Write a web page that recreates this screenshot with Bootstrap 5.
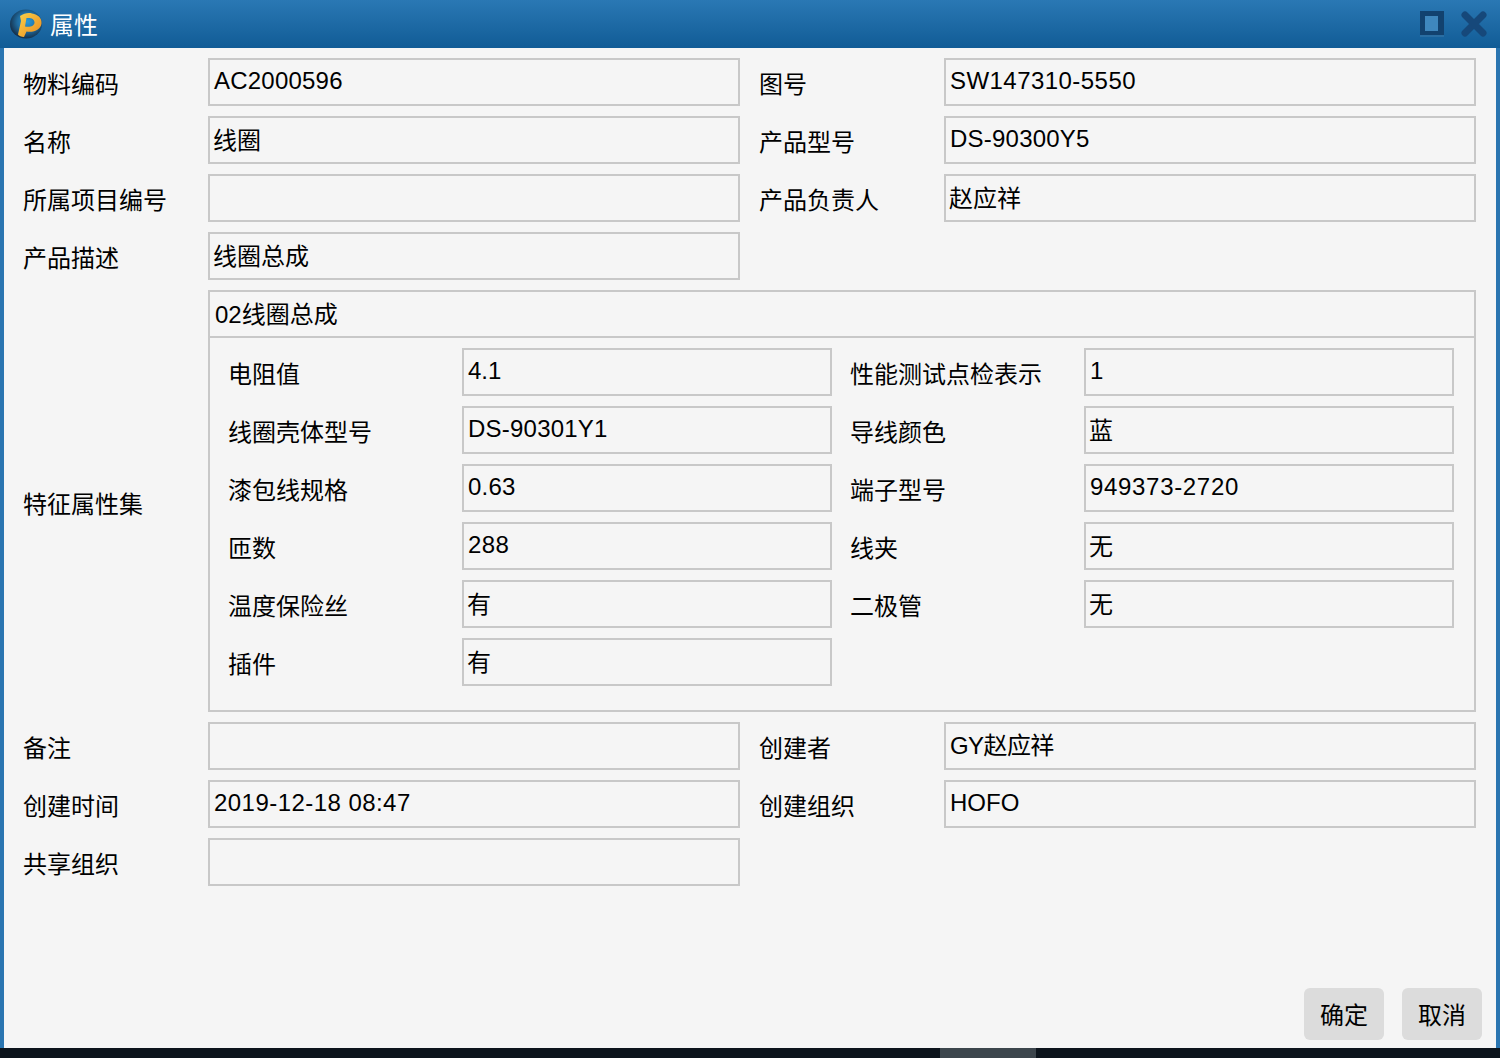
<!DOCTYPE html>
<html lang="zh">
<head>
<meta charset="utf-8">
<title>属性</title>
<link href="https://cdn.jsdelivr.net/npm/bootstrap@5.3.0/dist/css/bootstrap.min.css" rel="stylesheet">
<style>
html,body{height:100%;}
body{background:#0c141c;font-family:"Liberation Sans","Noto Sans CJK SC",sans-serif;font-size:24px;color:#000;overflow:hidden;}
.win{height:1048px;background:#f5f5f5;border-left:4px solid #2a75b0;border-right:4px solid #2a75b0;}
.titlebar{height:48px;margin:0 -4px;padding:0 13px 0 10px;background:linear-gradient(#2a78b4,#115c96);color:#fff;}
.titlebar .ttl{margin-left:8px;line-height:52px;height:48px;}
.tb-ico{display:block;flex:none;}
.tb-max{margin-right:17px;}
.body-area{padding:10px 20px 0 20px;height:1000px;position:relative;}
.prow{display:flex;gap:19px;margin-bottom:10px;}
.pcell{display:flex;align-items:center;width:717px;flex:none;}
.plabel{width:184px;height:48px;flex:none;line-height:54px;white-space:nowrap;text-indent:-1px;}
.grp-label{margin-top:4px;line-height:52px;}
.pval.form-control{width:532px;height:48px;flex:none;background:#f5f5f5;border:2px solid #c8c8c8;border-radius:0;padding:0 4px;font-size:24px;line-height:42px;color:#000;white-space:nowrap;overflow:hidden;}
.pval.form-control.val-cjk{line-height:46px;text-indent:-1px;}
.pval.form-control.val-mix{line-height:44px;letter-spacing:-.6px;}
.sp1{letter-spacing:.22px;}
.sp2{letter-spacing:.45px;}
.sp3{letter-spacing:.68px;}
.grp{width:1268px;height:422px;border:2px solid #c8c8c8;flex:none;}
.grp-h{height:46px;line-height:46px;padding:0 4px 0 5px;border-bottom:2px solid #c8c8c8;}
.grp-b{padding:10px 20px 0 18px;}
.irow{display:flex;gap:18px;margin-bottom:10px;}
.icell{display:flex;align-items:center;width:604px;flex:none;}
.icell .plabel{width:234px;text-indent:0;}
.icell .pval.form-control{width:370px;}
.foot{position:absolute;right:14px;bottom:8px;display:flex;gap:18px;}
.fbtn.btn{width:80px;height:52px;padding:0;background:#dcdcdc;border:0;border-radius:6px;font-size:24px;color:#000;line-height:56px;}
.sbar{height:10px;position:relative;}
.sthumb{position:absolute;left:940px;width:96px;height:10px;background:#3c454c;}
</style>
</head>
<body>
<div class="win">
 <div class="titlebar d-flex align-items-center">
  <svg class="tb-ico" width="32" height="30" viewBox="0 0 32 30"><defs><radialGradient id="g" cx=".55" cy=".42" r=".6"><stop offset="0" stop-color="#2a9ad8"/><stop offset=".55" stop-color="#1f6a9e"/><stop offset="1" stop-color="#142c44"/></radialGradient><linearGradient id="o" x1="0" y1="0" x2="1" y2="1"><stop offset="0" stop-color="#f8d24a"/><stop offset="1" stop-color="#ec8a1e"/></linearGradient></defs><ellipse cx="16" cy="15" rx="16" ry="14.500" fill="url(#g)"/><path fill-rule="evenodd" d="M10 7C14 4.500 18 3.500 22 4.500C28 5.500 32 9 31.500 14.500C31 20 24 24 16.500 22.500L14 28C11.500 28 9 27 8 25.500L11 12ZM16.500 9L15 17.500C20 18.500 24.500 17 24.500 13.500C24.500 9.500 20.500 8.500 16.500 9Z" fill="url(#o)"/></svg>
  <span class="ttl flex-grow-1">属性</span>
  <svg width="24" height="26" viewBox="0 0 24 26" class="tb-ico tb-max"><rect width="24" height="24" fill="#12426f"/><rect x="5" y="5" width="13" height="15" fill="#3f87bd"/><rect y="24" width="24" height="2" fill="#2a6ea3"/></svg>
  <svg width="26" height="26" viewBox="0 0 26 26" class="tb-ico"><path d="M4 4L22 22M22 4L4 22" stroke="#16487a" stroke-width="7" stroke-linecap="round"/></svg>
 </div>
 <div class="body-area">
  <div class="prow">
   <div class="pcell"><div class="plabel">物料编码</div><div class="pval form-control sp1">AC2000596</div></div>
   <div class="pcell"><div class="plabel">图号</div><div class="pval form-control sp2">SW147310-5550</div></div>
  </div>
  <div class="prow">
   <div class="pcell"><div class="plabel">名称</div><div class="pval form-control val-cjk">线圈</div></div>
   <div class="pcell"><div class="plabel">产品型号</div><div class="pval form-control sp1">DS-90300Y5</div></div>
  </div>
  <div class="prow">
   <div class="pcell"><div class="plabel">所属项目编号</div><div class="pval form-control"></div></div>
   <div class="pcell"><div class="plabel">产品负责人</div><div class="pval form-control val-cjk">赵应祥</div></div>
  </div>
  <div class="prow">
   <div class="pcell"><div class="plabel">产品描述</div><div class="pval form-control val-cjk">线圈总成</div></div>
  </div>
  <div class="prow">
   <div class="d-flex align-items-center">
    <div class="plabel grp-label">特征属性集</div>
    <div class="grp">
     <div class="grp-h">02线圈总成</div>
     <div class="grp-b">
      <div class="irow">
       <div class="icell"><div class="plabel">电阻值</div><div class="pval form-control">4.1</div></div>
       <div class="icell"><div class="plabel">性能测试点检表示</div><div class="pval form-control">1</div></div>
      </div>
      <div class="irow">
       <div class="icell"><div class="plabel">线圈壳体型号</div><div class="pval form-control sp1">DS-90301Y1</div></div>
       <div class="icell"><div class="plabel">导线颜色</div><div class="pval form-control val-cjk">蓝</div></div>
      </div>
      <div class="irow">
       <div class="icell"><div class="plabel">漆包线规格</div><div class="pval form-control sp1">0.63</div></div>
       <div class="icell"><div class="plabel">端子型号</div><div class="pval form-control sp3">949373-2720</div></div>
      </div>
      <div class="irow">
       <div class="icell"><div class="plabel">匝数</div><div class="pval form-control sp2">288</div></div>
       <div class="icell"><div class="plabel">线夹</div><div class="pval form-control val-cjk">无</div></div>
      </div>
      <div class="irow">
       <div class="icell"><div class="plabel">温度保险丝</div><div class="pval form-control val-cjk">有</div></div>
       <div class="icell"><div class="plabel">二极管</div><div class="pval form-control val-cjk">无</div></div>
      </div>
      <div class="irow">
       <div class="icell"><div class="plabel">插件</div><div class="pval form-control val-cjk">有</div></div>
      </div>
     </div>
    </div>
   </div>
  </div>
  <div class="prow">
   <div class="pcell"><div class="plabel">备注</div><div class="pval form-control"></div></div>
   <div class="pcell"><div class="plabel">创建者</div><div class="pval form-control val-mix">GY赵应祥</div></div>
  </div>
  <div class="prow">
   <div class="pcell"><div class="plabel">创建时间</div><div class="pval form-control sp2">2019-12-18 08:47</div></div>
   <div class="pcell"><div class="plabel">创建组织</div><div class="pval form-control">HOFO</div></div>
  </div>
  <div class="prow">
   <div class="pcell"><div class="plabel">共享组织</div><div class="pval form-control"></div></div>
  </div>
  <div class="foot">
   <button type="button" class="btn fbtn">确定</button>
   <button type="button" class="btn fbtn">取消</button>
  </div>
 </div>
</div>
<div class="sbar"><div class="sthumb"></div></div>
<script src="https://cdn.jsdelivr.net/npm/bootstrap@5.3.0/dist/js/bootstrap.bundle.min.js"></script>
</body>
</html>
